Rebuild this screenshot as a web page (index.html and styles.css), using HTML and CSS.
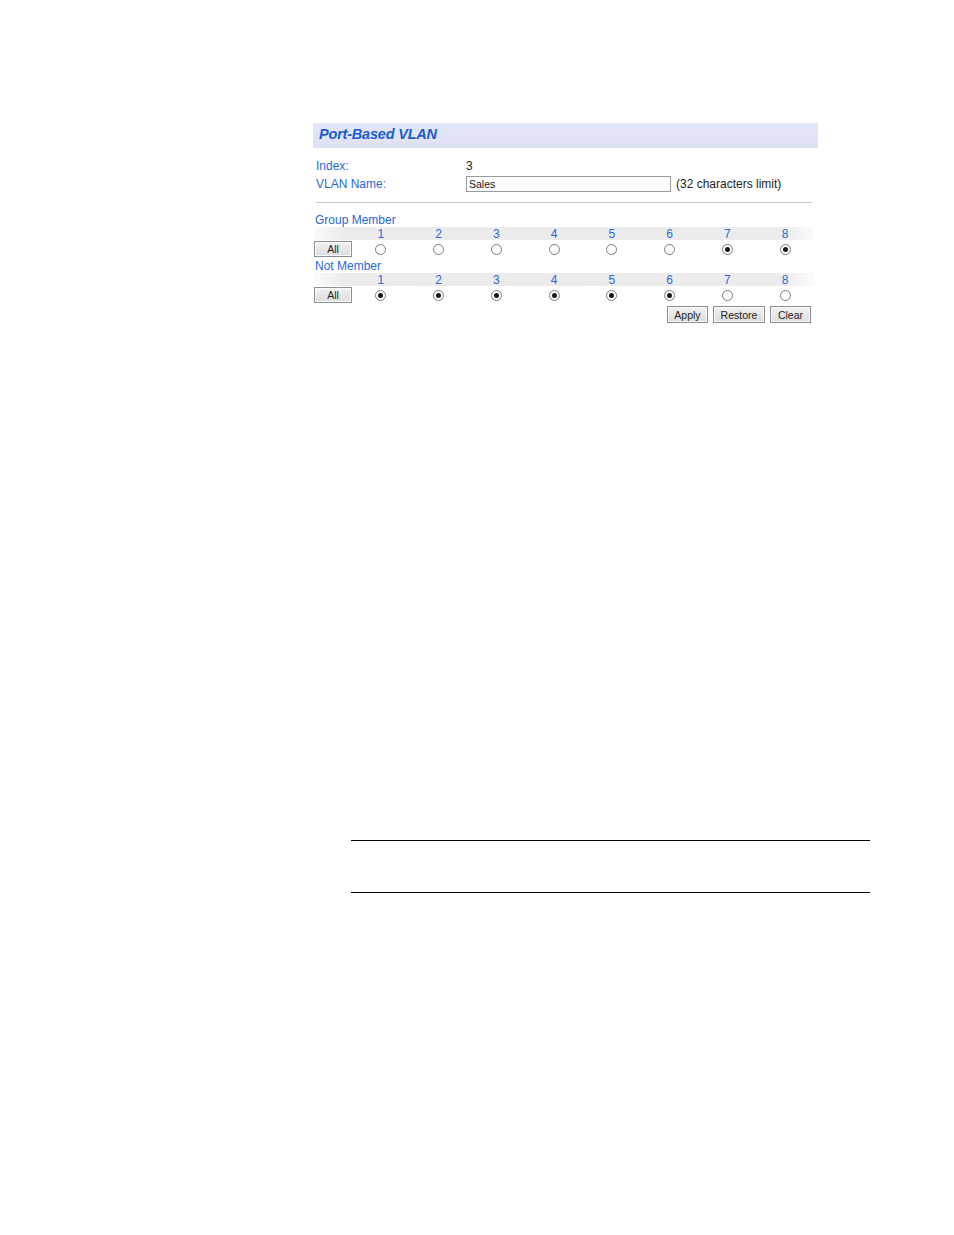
FILE: index.html
```html
<!DOCTYPE html>
<html>
<head>
<meta charset="utf-8">
<link rel="stylesheet" href="styles.css">
</head>
<body>
<div class="page">
  <div class="panel">
    <div class="header"><span class="title">Port-Based VLAN</span></div>
    <div class="field">
      <span class="label">Index:</span>
      <span class="value">3</span>
    </div>
    <div class="field">
      <span class="label">VLAN Name:</span>
      <input class="text" type="text" value="Sales">
      <span class="hint">(32 characters limit)</span>
    </div>
    <div class="rule"></div>
    <div class="section">Group Member</div>
    <div class="grid nums">
      <span></span><span>1</span><span>2</span><span>3</span><span>4</span><span>5</span><span>6</span><span>7</span><span>8</span>
    </div>
    <div class="grid radios">
      <button class="btn all">All</button>
      <span class="radio"></span><span class="radio"></span><span class="radio"></span><span class="radio"></span>
      <span class="radio"></span><span class="radio"></span><span class="radio on"></span><span class="radio on"></span>
    </div>
    <div class="section">Not Member</div>
    <div class="grid nums">
      <span></span><span>1</span><span>2</span><span>3</span><span>4</span><span>5</span><span>6</span><span>7</span><span>8</span>
    </div>
    <div class="grid radios">
      <button class="btn all">All</button>
      <span class="radio on"></span><span class="radio on"></span><span class="radio on"></span><span class="radio on"></span>
      <span class="radio on"></span><span class="radio on"></span><span class="radio"></span><span class="radio"></span>
    </div>
    <div class="actions">
      <button class="btn apply">Apply</button>
      <button class="btn restore">Restore</button>
      <button class="btn clear">Clear</button>
    </div>
  </div>
  <div class="note">
    <div class="note-line"></div>
    <div class="note-body"></div>
    <div class="note-line"></div>
  </div>
</div>
</body>
</html>
```

FILE: styles.css
```css
html, body {
  margin: 0;
  padding: 0;
  background: #ffffff;
}
body {
  font-family: "Liberation Sans", Arial, sans-serif;
  font-size: 12px;
  color: #222;
}
.page {
  padding-top: 123px;
}
.panel {
  margin-left: 313px;
  width: 505px;
}
.header {
  height: 25px;
  box-sizing: border-box;
  background: linear-gradient(to bottom, #e3e6f6, #dde1f4);
  display: flex;
  align-items: center;
  padding-left: 6px;
  padding-bottom: 3px;
}
.title {
  color: #1c5ccc;
  font-weight: bold;
  font-style: italic;
  font-size: 14.5px;
  letter-spacing: -0.2px;
}
.field {
  display: flex;
  align-items: center;
  height: 18px;
  padding-left: 3px;
}
.field:nth-of-type(2) {
  margin-top: 9px;
}
.label {
  width: 150px;
  color: #2a68d4;
}
.value {
  color: #222;
}
.text {
  width: 205px;
  height: 16px;
  box-sizing: border-box;
  border: 1px solid #9a9a9a;
  padding: 0 2px;
  font-family: "Liberation Sans", Arial, sans-serif;
  font-size: 10.5px;
  color: #111;
  margin: 0;
}
.hint {
  margin-left: 5px;
  color: #222;
}
.rule {
  height: 1px;
  background: #c8c8c8;
  margin: 9px 6px 10px 3px;
}
.section {
  height: 14px;
  line-height: 14px;
  color: #2a68d4;
  padding-left: 2px;
}
.grid {
  display: grid;
  grid-template-columns: 38px repeat(8, 1fr);
  width: 500px;
  margin-left: 1px;
  align-items: center;
  justify-items: center;
}
.nums {
  height: 13px;
  line-height: 15px;
  color: #2a68d4;
  background: linear-gradient(to right, rgba(236,236,236,0.2), #ebebeb 6%, #ececec 94%, rgba(236,236,236,0.2));
}
.radios {
  height: 18px;
  margin-bottom: 1px;
}
.btn {
  font-family: "Liberation Sans", Arial, sans-serif;
  font-size: 10.5px;
  color: #222;
  background: linear-gradient(to bottom, #f2f2f2, #dcdcdc);
  border: 1px solid #8e8e8e;
  padding: 0;
  margin: 0;
  height: 16px;
  box-shadow: inset 0 0 0 1px #fafafa;
}
.all {
  width: 38px;
  justify-self: start;
}
.radio {
  width: 9px;
  height: 9px;
  border: 1px solid #7a7a7a;
  border-radius: 50%;
  background: #fff;
  box-sizing: content-box;
  position: relative;
}
.radio.on::after {
  content: "";
  position: absolute;
  left: 2px;
  top: 2px;
  width: 5px;
  height: 5px;
  border-radius: 50%;
  background: #1a1a1a;
}
.actions {
  display: flex;
  justify-content: flex-end;
  gap: 5px;
  margin-top: 2px;
  padding-right: 7px;
}
.actions .btn {
  height: 17px;
}
.apply { width: 41px; }
.restore { width: 52px; }
.clear { width: 41px; }
.note {
  margin-left: 351px;
  width: 519px;
  margin-top: 517px;
}
.note-line {
  height: 1px;
  background: #000;
}
.note-body {
  height: 51px;
}
```
